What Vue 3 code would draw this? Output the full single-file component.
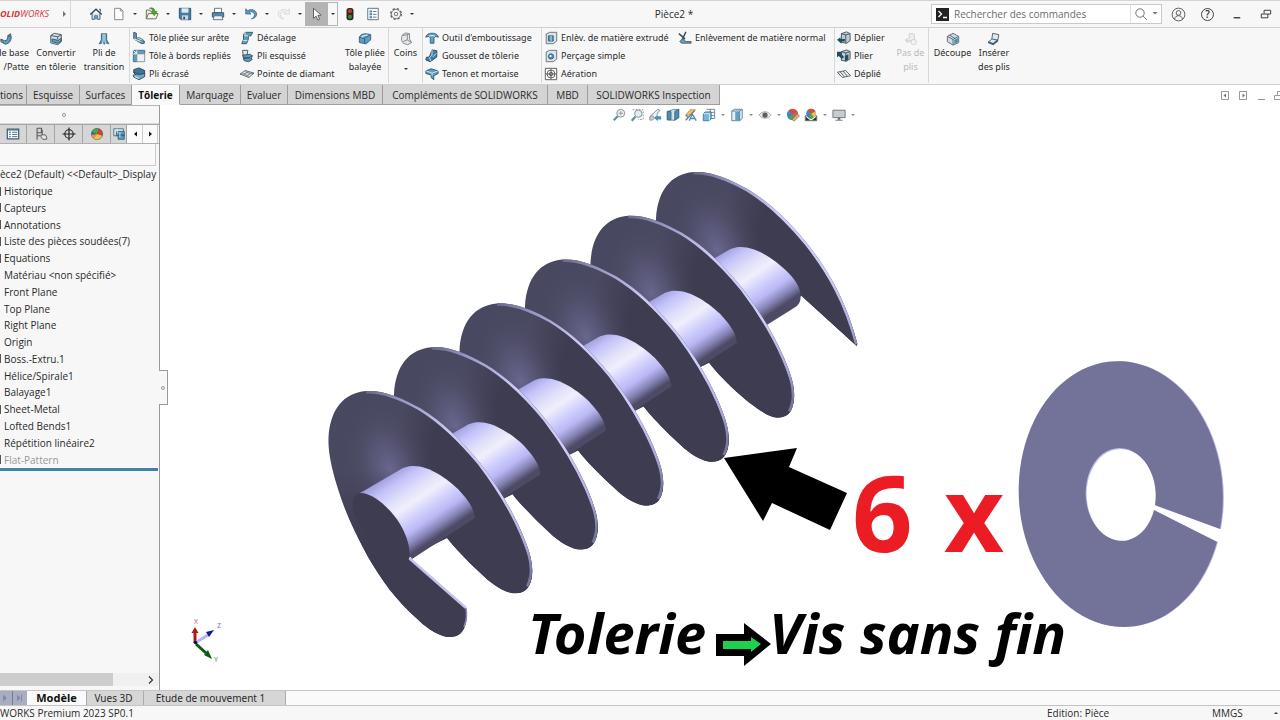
<script setup>
import { ref } from 'vue'

const steel = '#5d9dbd'
const pale = '#cfe3ee'
const ink = '#35505f'

const cube = `<path d="M5 3l6-2 4 2v8l-4 3-6-1z" fill="#c3cacf" stroke="${ink}"/><path d="M5 3l5 1.500 5-1.500M10 4.500V14" fill="none" stroke="${ink}"/>`

const icons = {
  home: `<path d="M3.500 7.500v6.500h3v-4h3v4h3V7.500" fill="#d5e5ee" stroke="#3a4a54"/><path d="M1.500 8.500L8 2.500l6.500 6" fill="none" stroke="#2d4654" stroke-width="1.600"/><path d="M11.500 2.500h1.500v3" fill="none" stroke="#3a4a54"/><path d="M6.500 10h3v4h-3z" fill="${steel}"/>`,
  page: `<path d="M3 1.500h6.500l3 3v10H3z" fill="#fff" stroke="#7d7d7d"/><path d="M9.500 1.500v3h3" fill="none" stroke="#7d7d7d"/>`,
  open: `<path d="M1.500 13.500v-10h4l1.500 2h5v2" fill="#efeedd" stroke="#5f5f4c"/><path d="M1.500 13.500l2.500-6h11l-2.500 6z" fill="#f6f5e6" stroke="#5f5f4c"/><path d="M5 1.500c4-1.500 6 .5 6.500 3.500h2.500L10.500 10 7 5h2c-.5-2-1.500-3-4-3.500z" fill="#49a52f" stroke="#2c7a1a" stroke-width=".5"/>`,
  save: `<path d="M1.500 1.500h13v13h-11l-2-2z" fill="#3f7fa5" stroke="#28506a"/><path d="M4 1.500h8v5H4z" fill="#dfeaf0"/><path d="M4.500 9.500h7v5h-7z" fill="#c9d6de"/><path d="M6 11h2v3H6z" fill="#28506a"/>`,
  print: `<path d="M4 1.500h8v5H4z" fill="#fff" stroke="#5b6a72"/><path d="M1.500 6.500h13v5h-13z" fill="#4e8db1" stroke="#2c5468"/><path d="M3.500 10h9l1 4.500h-11z" fill="#eaf0f3" stroke="#5b6a72"/>`,
  undo: `<path d="M2 2v6h6L6 6c3-1.500 6 .5 6 3 0 2-1.500 3.500-3.500 4.500C12 13 14.500 11 14.500 8 14 3.500 8.500 1.500 4.200 4.200z" fill="#5b9cc0" stroke="#2f5f7d" stroke-width=".8"/>`,
  redo: `<path d="M14 2v6H8l2-2c-3-1.500-6 .5-6 3 0 2 1.500 3.500 3.500 4.500C4 13 1.500 11 1.500 8 2 3.500 7.500 1.500 11.800 4.200z" fill="#f2f2f2" stroke="#cfcfcf" stroke-width=".8"/>`,
  cursor: `<path d="M4 1.500v11.500l3-2.500 2 4.500 2-1-2-4.300 3.700-.4z" fill="#fff" stroke="#444" stroke-width=".9"/>`,
  traffic: `<rect x="4" y="1" width="8" height="14" rx="3" fill="#33251f"/><circle cx="8" cy="4.700" r="2.400" fill="#c23a2c"/><circle cx="8" cy="11.200" r="2.400" fill="#2f8a42"/>`,
  props: `<path d="M2 1.500h12v13H2z" fill="#fff" stroke="#53646d"/><path d="M4 4h3v2.300H4zM4 7.200h3v2.300H4zM4 10.500h3v2.300H4z" fill="#4c87a8"/><path d="M8 5.200h4M8 8.400h4M8 11.600h4" stroke="#53646d"/>`,
  gear: `<circle cx="8" cy="8" r="6" fill="none" stroke="#666" stroke-width="1.800" stroke-dasharray="2.700 2.010"/><circle cx="8" cy="8" r="5.200" fill="#f7f7f7" stroke="#666" stroke-width=".9"/><circle cx="8" cy="8" r="2" fill="none" stroke="#666"/>`,
  user: `<circle cx="8" cy="8" r="6.800" fill="none" stroke="#555"/><circle cx="8" cy="6.300" r="2.500" fill="none" stroke="#555"/><path d="M3.800 13c.4-5 8-5 8.400 0" fill="none" stroke="#555"/>`,
  base: `<path d="M1 8l4 2c3 0 4-2 4-6l3-2c2 6 0 11-6 12l-5-3z" fill="${steel}" stroke="${ink}"/><path d="M9 4l3 1.500" stroke="${ink}"/>`,
  convert: `<path d="M2 4l4-2.500 8 1.500v8l-4 3.500-8-2z" fill="#d6dde1" stroke="${ink}"/><path d="M2 4l8 1.500L14 3M10 5.500v3" fill="none" stroke="${ink}"/><path d="M3.500 8l7 1.500L14 7v3.500L10.500 13l-7-2z" fill="${steel}" stroke="${ink}"/>`,
  lofted: `<path d="M5 2h6v7l2.500 4.500-4-1.500-1 2-1.500-2-4.500 1.500L5 9z" fill="${steel}" stroke="#2f5c78"/><path d="M7 2v8l-1 3M9 2v8l1 3" stroke="${pale}" fill="none"/>`,
  edge: `<path d="M2 1.500l3 1v6l9 3v2.500l-3 .5-9-5.500z" fill="${steel}" stroke="${ink}"/><path d="M5 8.500c3-2 6 0 9 3" fill="${pale}" stroke="${ink}"/><path d="M2 9l8 3" stroke="#fff"/>`,
  miter: `<path d="M1.500 1.500h13v4h-9v9h-4z" fill="${steel}" stroke="#376d8d"/><path d="M5.500 5.500h9v9h-9z" fill="#edf1f3" stroke="#7f8b92"/><path d="M1.500 1.500l4 4M1.500 5.500h4M5.500 1.500v4" stroke="#fff"/>`,
  hem: `<path d="M2 3l6-2 6.500 3v3L10 9 2 6z" fill="#3c7799" stroke="#234458"/><path d="M2 6c0 3 9 3 12.500 1v4L8 14.500 2 11.500c-1.500-2 0-3 2-3z" fill="#6fa9c6" stroke="#234458"/><path d="M3 11l5 2" stroke="#fff"/>`,
  jog: `<path d="M6 1.500h8.500l-2 4h-3v4l-2 5H2l2-5V4z" fill="${steel}" stroke="${ink}"/><path d="M6 1.500l-.5 4H9.500M3.500 11h5" stroke="#e3eff5" fill="none"/>`,
  sketched: `<path d="M3 1.500h6l-1 6h6l-1 4H4z" fill="#e1e9ed" stroke="${ink}"/><path d="M3 7l9-1 2 2-4 2-6-.500zM4 11l8-1 2 2-4 2.500-5-1z" fill="${steel}" stroke="${ink}"/>`,
  diamond: `<path d="M0 8l6-4 10 3-6 5z" fill="#e2e5e7" stroke="#59656b"/><path d="M4 8l4-2 4 1.500-3.500 2.500zM0 8l4 0M8 6l-2-2M12 7.500l4-.5M8.500 10l1.500 2" fill="#cbd3d7" stroke="#59656b" stroke-width=".8"/>`,
  swept: `<path d="M1.500 6c2-4 6-5 13-3v6L9 13.500 1.500 12z" fill="${steel}" stroke="#2e5f7c"/><path d="M1.500 6l6 1.500c1-1.500 3-2.500 7-4.500M7.500 7.500v5.500" fill="none" stroke="#2e5f7c"/><path d="M4 6c2-2.500 4-2.500 7-2.500" stroke="${pale}" fill="none" stroke-width="1.500"/>`,
  corner: `<path d="M4 3l4-2 4 1v6l2.500 4-4.500 2.500-5-1.500C2 10 2.500 6 4 3z" fill="#e4e6e7" stroke="#7b8388"/><path d="M4.500 11l5-2 4.500 3M9.500 9V3L12 2M9.500 3L4 4" fill="none" stroke="#7b8388"/>`,
  forming: `<path d="M.8 7c1-6 13.500-6 14.500 0l-4-.8-1 2V14H6V8.200l-1-2z" fill="#62a2c2" stroke="#2e5f7c"/><path d="M4.500 6c2-1 5-1 7 0" stroke="#fff" fill="none"/>`,
  gusset: `<path d="M8 1l5.500 1v7L6 14.500l-5-2 .5-3L5 9z" fill="#3f7fa5" stroke="#23485e"/><path d="M8 1v6l-3 3 2 4M9 9l4-4" stroke="#d7e9f2" fill="none"/>`,
  tenon: `<path d="M1 4.500L7 2l8 2.500v3L10 10v4.500L7 12V9L1 7.500z" fill="${steel}" stroke="#2a526a"/><path d="M1 4.500L8 7l7-2.500M8 7v3" stroke="#d7e9f2" fill="none"/>`,
  cutExtrude: `<path d="M2.500 3.500l4-2h8v10l-4 3h-8z" fill="#dfe3e6" stroke="#5c6a72"/><path d="M5 5.500h5.500v6H5z" fill="#4c90b5" stroke="#2e5f7c"/><path d="M8 5.500v6" stroke="#dbeaf2"/>`,
  hole: `<path d="M2.500 3.500l4-2h8v10l-4 3h-8z" fill="#dfe3e6" stroke="#5c6a72"/><ellipse cx="8" cy="8.500" rx="3" ry="3" fill="#4c90b5" stroke="#2e5f7c"/><circle cx="7.500" cy="8" r="1.200" fill="#fff"/>`,
  vent: `<path d="M1.500 1.500h13v13h-13z" fill="#fff" stroke="#4b4b4b"/><circle cx="8" cy="8" r="4.500" fill="none" stroke="#4b4b4b"/><circle cx="8" cy="8" r="2" fill="none" stroke="#4b4b4b"/><path d="M8 2v12M2 8h12" stroke="#4b4b4b"/>`,
  normalCut: `<path d="M1 3l7 6M9 1L4 11.500" stroke="#3b4a52" stroke-width="1.600"/><path d="M2 12l4-4 2.500 4h6.500v2H4z" fill="${steel}" stroke="#3b4a52" stroke-width=".8"/>`,
  unfold: `${cube}<path d="M0 10l4-3v2h5v3H5v2.500z" fill="#234b62"/>`,
  fold: `${cube}<path d="M0 3h6L4.500 5 8 9l-2.500 2.500L2 8 0 9.500zM9 8l4-2v6l-4 2z" fill="#234b62"/>`,
  flatten: `<path d="M.5 6L10 4l5.500 6-9.500 2z" fill="#e9ecee" stroke="#505a5f"/><path d="M3.500 5.300l5 6M7 4.700l5 6" stroke="#505a5f"/>`,
  noBends: `<path d="M6 1.500l6 1v6L3 12l-1.500-3L6 7z" fill="#ececec" stroke="#cfcfcf"/><path d="M2 9l6 2 5-2" fill="none" stroke="#cfcfcf"/><circle cx="11" cy="11.500" r="3" fill="#f3f3f3" stroke="#cfcfcf"/>`,
  rip: `<path d="M1.500 5L8 1.500 14.500 5v7L8 15l-6.500-4z" fill="#d5dade" stroke="#53646d"/><path d="M1.500 5L8 8.500 14.500 5M8 8.500V15M4 3.500l6.500 4" fill="none" stroke="#53646d"/><path d="M9.500 9l4-2.200v4.700l-4 2.300z" fill="#3d8fbd"/>`,
  insertBends: `<path d="M6.500 1.500l7 1.500-1 6L7 14 1.500 11.500l4-3.500z" fill="#e4e8ea" stroke="#43545d"/><path d="M5.500 8l7 1.200" stroke="#43545d"/><path d="M1.500 11.500L7 14l5.500-4.500" fill="none" stroke="#2f6585" stroke-width="2.200"/>`,
  zoomFit: `<circle cx="10" cy="6" r="4.500" fill="#eef3f6" stroke="#7c878d"/><path d="M6.500 9.500L2 14" stroke="#5c8aa3" stroke-width="2.400"/><path d="M10 3.500v5M7.500 6h5" stroke="#7c878d" stroke-width=".9"/>`,
  zoomArea: `<path d="M3 2h12v11H9" fill="none" stroke="#7c878d" stroke-dasharray="2 1.500"/><circle cx="9.500" cy="6.500" r="4.200" fill="#e5edf1" stroke="#7c878d"/><path d="M6 10l-4 4.500" stroke="#5c8aa3" stroke-width="2.400"/>`,
  previous: `<path d="M2 10L11 1.500l2.500 1L10 7.500" fill="#e6ebee" stroke="#7c878d"/><path d="M2 10.500c2-2 4-2 5 0s-3 4.500-5 3z" fill="#c9d1d6" stroke="#7c878d"/><path d="M7 11l4-3.500v2h4V13h-4v2z" fill="#4b8fb3"/>`,
  section: `<path d="M1.500 4l6-2 7-.5v9.500l-5 3-8-.5z" fill="#dfe7eb" stroke="#5c7a8a"/><path d="M1.500 4h4v9.500h-4zM10 4l4.500-2.500V11L10 14z" fill="#4b8fb3" stroke="#35667f"/><path d="M6.500 4v9" stroke="#8ba0ab"/>`,
  dynamic: `<path d="M2 8l5-6h6L8 8z" fill="#f0c36a" stroke="#a88341" stroke-width=".8"/><path d="M2 14L12 3M2 8l3 3" fill="none" stroke="#6b7b84" stroke-width="1.500"/><path d="M6 14.500L9.500 7l4.500 7.500M7.500 12h5" stroke="#4b8fb3" stroke-width="1.500" fill="none"/>`,
  orient: `<path d="M5 1.500h9.500V12H10" fill="#fff" stroke="#6d7a82"/><path d="M9.500 1.500v5M6 5h8.500M10 8.500h4.500" stroke="#6d7a82"/><path d="M1.500 6.500l2-2h7v8l-2 2h-7z" fill="#76b7d8" stroke="#35789b"/><path d="M1.500 6.500h7v8" fill="none" stroke="#dceef7"/>`,
  display: `<path d="M2 3.500l3-2h9v10.500l-3 2.500H2z" fill="#e4eff5" stroke="#5b7b8c"/><path d="M6 4.500h5v10H6z" fill="#5aa3c9"/><path d="M2 3.500h9v11M11 3.500l3-2" fill="none" stroke="#5b7b8c"/>`,
  eye: `<path d="M1 8c4-5 10-5 14 0-4 5-10 5-14 0z" fill="#e9e9e9" stroke="#a5a5a5"/><circle cx="8" cy="8" r="3" fill="#5c5c5c"/>`,
  ball: `<circle cx="7.500" cy="7.500" r="6.500" fill="#3f86c6"/><path d="M7.500 7.500L3 2.800A6.500 6.500 0 0 1 13 4z" fill="#db4a3c"/><path d="M7.500 7.500L13 4a6.500 6.500 0 0 1-2 8.500z" fill="#d9604c"/><path d="M7.500 7.500l3.500 5a6.500 6.500 0 0 1-8-.5z" fill="#4aa54f"/><path d="M7 13l6-6 2.500 2-6 6z" fill="#d9b67c" stroke="#77613f" stroke-width=".6"/>`,
  scene: `<path d="M1.500 9h13v5.500h-13z" fill="#fff" stroke="#4f4f4f"/><path d="M2 14V10l5 4zM14 14v-4l-5 4z" fill="#333"/><circle cx="8" cy="6.500" r="5.500" fill="#3f86c6"/><path d="M8 6.500L4.200 2.500A5.500 5.500 0 0 1 13 4z" fill="#db4a3c"/><path d="M8 6.500L13 4a5.500 5.500 0 0 1-2 7z" fill="#efc33f"/><path d="M8 6.500l3 4.500a5.500 5.500 0 0 1-6.500 0z" fill="#4aa54f"/>`,
  monitor: `<path d="M1 2.500h14v8.500H1z" fill="#c8ccce" stroke="#6a6f72"/><path d="M6.500 11h3v2.500h-3z" fill="#6a6f72"/><path d="M4 14h8" stroke="#6a6f72"/>`,
  feature: `<path d="M1.500 2.500h13v11h-13z" fill="#fff" stroke="#3b5f74" stroke-width="1.400"/><path d="M2 3.500h12" stroke="#3b5f74"/><path d="M3.500 6h2M3.500 8.500h2M3.500 11h2" stroke="#4b8fb3" stroke-width="1.500"/><path d="M7 6h6M7 8.500h6M7 11h6" stroke="#3b5f74"/>`,
  config: `<path d="M3.500 1.500v13M3.500 1.500h5v5h-5M3.500 10h4" fill="none" stroke="#555" stroke-width="1.200"/><path d="M9.500 3v6M8 9h5l1.500 2.500V14H10l-2-2.500z" fill="#e4e4e4" stroke="#555"/>`,
  target: `<circle cx="8" cy="8" r="4.800" fill="none" stroke="#222" stroke-width="1.300"/><path d="M8 .5v15M.5 8h15" stroke="#222" stroke-width="1.300"/>`,
  sphere: `<circle cx="8" cy="8" r="6.500" fill="#3f5fa4" stroke="#555" stroke-width=".6"/><path d="M8 8L2 5.500A6.500 6.500 0 0 1 10 2z" fill="#4aa54f"/><path d="M8 8l2-6a6.500 6.500 0 0 1 4 8z" fill="#d93d31"/><path d="M8 8l6 2a6.500 6.500 0 0 1-10 3z" fill="#efc33f"/><path d="M8 8l-4 5a6.500 6.500 0 0 1-2.400-4z" fill="#e89a3a"/>`,
  cam: `<path d="M2 2h11v8H2z" fill="#dbe8ef" stroke="#476f85"/><path d="M5 5h9v5H5zM7 9h7v5H7z" fill="#5d9dbd" stroke="#35607a"/><path d="M6 2v5M9 6v6" stroke="#e6f1f6"/>`
}

const fileTools = [
  { icon: 'home', label: 'Accueil' },
  { icon: 'page', label: 'Nouveau', menu: true },
  { icon: 'open', label: 'Ouvrir', menu: true },
  { icon: 'save', label: 'Enregistrer', menu: true },
  { icon: 'print', label: 'Imprimer', menu: true },
  { icon: 'undo', label: 'Annuler', menu: true },
  { icon: 'redo', label: 'Rétablir', menu: true, off: true },
  { icon: 'cursor', label: 'Sélectionner', menu: true, active: true },
  { icon: 'traffic', label: 'Reconstruire' },
  { icon: 'props', label: 'Propriétés' },
  { icon: 'gear', label: 'Options', menu: true }
]

const ribbon = [
  { big: true, icon: 'base', lines: ['de base', '/Patte'], cut: true },
  { big: true, icon: 'convert', lines: ['Convertir', 'en tôlerie'] },
  { big: true, icon: 'lofted', lines: ['Pli de', 'transition'] },
  { sep: true, items: [['edge', 'Tôle pliée sur arête'], ['miter', 'Tôle à bords repliés'], ['hem', 'Pli écrasé']] },
  { items: [['jog', 'Décalage'], ['sketched', 'Pli esquissé'], ['diamond', 'Pointe de diamant']] },
  { big: true, icon: 'swept', lines: ['Tôle pliée', 'balayée'] },
  { big: true, sep: true, icon: 'corner', lines: ['Coins'], menu: true },
  { sep: true, items: [['forming', "Outil d'emboutissage"], ['gusset', 'Gousset de tôlerie'], ['tenon', 'Tenon et mortaise']] },
  { sep: true, items: [['cutExtrude', 'Enlèv. de matière extrudé'], ['hole', 'Perçage simple'], ['vent', 'Aération']] },
  { items: [['normalCut', 'Enlèvement de matière normal']] },
  { sep: true, items: [['unfold', 'Déplier'], ['fold', 'Plier'], ['flatten', 'Déplié']] },
  { big: true, icon: 'noBends', lines: ['Pas de', 'plis'], off: true },
  { big: true, sep: true, icon: 'rip', lines: ['Découpe'] },
  { big: true, icon: 'insertBends', lines: ['Insérer', 'des plis'] }
]

const tabs = ['tions', 'Esquisse', 'Surfaces', 'Tôlerie', 'Marquage', 'Evaluer', 'Dimensions MBD', 'Compléments de SOLIDWORKS', 'MBD', 'SOLIDWORKS Inspection']
const activeTab = ref('Tôlerie')

const panelTabs = [['feature', 'Arbre'], ['config', 'Configurations'], ['target', 'Cotations'], ['sphere', 'Apparences'], ['cam', 'Usinage']]

const tree = [
  { t: 'èce2 (Default) <<Default>_Display', root: true },
  { t: 'Historique', m: true },
  { t: 'Capteurs', m: true },
  { t: 'Annotations', m: true },
  { t: 'Liste des pièces soudées(7)', m: true },
  { t: 'Equations', m: true },
  { t: 'Matériau <non spécifié>' },
  { t: 'Front Plane' },
  { t: 'Top Plane' },
  { t: 'Right Plane' },
  { t: 'Origin' },
  { t: 'Boss.-Extru.1', m: true },
  { t: 'Hélice/Spirale1' },
  { t: 'Balayage1' },
  { t: 'Sheet-Metal', m: true },
  { t: 'Lofted Bends1' },
  { t: 'Répétition linéaire2' },
  { t: 'Flat-Pattern', m: true, off: true }
]

const viewTools = [
  ['zoomFit', 'Zoom au mieux'], ['zoomArea', 'Zoom fenêtre'], ['previous', 'Vue précédente'], ['section', 'Vue en coupe'],
  ['dynamic', 'Annotations dynamiques'], ['orient', 'Orientation', true], ['display', "Style d'affichage", true],
  ['eye', 'Masquer', true], ['ball', 'Apparence'], ['scene', 'Scène', true], ['monitor', 'Affichage', true]
]

const sheets = ['Modèle', 'Vues 3D', 'Etude de mouvement 1']
const activeSheet = ref('Modèle')

const step = { x: 65.5, y: -43.8 }
const turns = [4, 3, 2, 1, 0].map(n => `translate(${n * step.x} ${n * step.y})`)
const lastTurn = `translate(${5 * step.x} ${5 * step.y})`
</script>

<template>
  <div class="app">
    <header class="titlebar">
      <div class="brand"><b>OLID</b><i>WORKS</i><span class="brand-arrow"></span></div>
      <div class="file-tools">
        <div v-for="f in fileTools" :key="f.icon" class="tool" :class="{ active: f.active, off: f.off }">
          <button class="tool-btn" :aria-label="f.label"><svg class="ico" viewBox="0 0 16 16" v-html="icons[f.icon]"></svg></button>
          <button v-if="f.menu" class="tool-menu" :aria-label="f.label + ' menu'"><span class="caret"></span></button>
        </div>
      </div>
      <div class="doc-title">Pièce2 *</div>
      <div class="title-right">
        <div class="search">
          <svg class="prompt" viewBox="0 0 13 13"><rect width="13" height="13" fill="#222" /><path d="M2.500 3l3 3-3 3M7 9.500h4" stroke="#fff" stroke-width="1.300" fill="none" /></svg>
          <input type="text" placeholder="Rechercher des commandes" aria-label="Rechercher des commandes" />
          <button class="search-go" aria-label="Lancer la recherche">
            <svg viewBox="0 0 24 16"><circle cx="6" cy="7" r="4.200" fill="none" stroke="#777" /><path d="M9 10l4 4" stroke="#777" /><path d="M18.500 6h5l-2.500 2.500z" fill="#777" /></svg>
          </button>
        </div>
        <button class="win" aria-label="Compte"><svg viewBox="0 0 16 16" v-html="icons.user"></svg></button>
        <button class="win help" aria-label="Aide"><span>?</span></button>
        <button class="win" aria-label="Réduire"><svg viewBox="0 0 16 16"><path d="M5 11.500h7" stroke="#222" stroke-width="1.300" /></svg></button>
        <button class="win" aria-label="Restaurer"><svg viewBox="0 0 16 16"><path d="M3.500 7.500h7v4h-7zM6.500 7V3.500h7v4h-3" fill="none" stroke="#333" /></svg></button>
      </div>
    </header>

    <section class="ribbon">
      <div v-for="(g, i) in ribbon" :key="i" class="group" :class="{ sep: g.sep, off: g.off, cut: g.cut }">
        <button v-if="g.big" class="big">
          <svg class="ico" viewBox="0 0 16 16" v-html="icons[g.icon]"></svg>
          <span v-for="l in g.lines" :key="l">{{ l }}</span>
          <span v-if="g.menu" class="caret"></span>
        </button>
        <template v-else>
          <button v-for="it in g.items" :key="it[1]" class="small">
            <svg class="ico" viewBox="0 0 16 16" v-html="icons[it[0]]"></svg>{{ it[1] }}
          </button>
        </template>
      </div>
    </section>

    <div class="tabrow">
      <nav class="tabs">
        <button v-for="t in tabs" :key="t" :class="{ on: t === activeTab }" @click="activeTab = t">{{ t }}</button>
      </nav>
      <div class="doc-win">
        <svg viewBox="0 0 62 12" fill="none" stroke="#999">
          <path d="M3.500 1.500h7v8h-7z M21.500 1.500h7v8h-7z M40 9.500h7 M56.500 5.500h7v4h-7z M59.500 5V1.500h7" />
          <path d="M8 3.500v4l-2.500-2zM24.500 3.500v4l2.500-2z" fill="#777" stroke="none" />
        </svg>
      </div>
    </div>

    <main class="work">
      <aside class="panel">
        <div class="grip"><span></span></div>
        <div class="panel-tabs">
          <button v-for="p in panelTabs" :key="p[0]" :aria-label="p[1]"><svg class="ico" viewBox="0 0 16 16" v-html="icons[p[0]]"></svg></button>
          <button class="nudge" aria-label="Précédent"><svg viewBox="0 0 6 8"><path d="M5 1.500v5L2 4z" fill="#111" /></svg></button>
          <button class="nudge" aria-label="Suivant"><svg viewBox="0 0 6 8"><path d="M2 1.500v5L5 4z" fill="#111" /></svg></button>
        </div>
        <input class="filter" type="text" aria-label="Filtre" />
        <ul class="tree">
          <li v-for="n in tree" :key="n.t" :class="{ root: n.root, mark: n.m, off: n.off }">{{ n.t }}</li>
        </ul>
        <div class="rollback"></div>
        <div class="hscroll"><span class="thumb"></span><svg viewBox="0 0 6 8"><path d="M1 .5L4.500 4 1 7.500" fill="none" stroke="#333" stroke-width="1.200" /></svg></div>
        <button class="drawer" aria-label="Replier le panneau"><span></span></button>
      </aside>

      <div class="stage">
        <svg class="scene" viewBox="160 105 1120 585">
          <defs>
            <linearGradient id="tube" gradientUnits="userSpaceOnUse" x1="399" y1="461" x2="446" y2="531">
              <stop offset="0" stop-color="#6d6c98" />
              <stop offset=".08" stop-color="#a3a2dc" />
              <stop offset=".2" stop-color="#c3c2fb" />
              <stop offset=".36" stop-color="#dfdff9" />
              <stop offset=".5" stop-color="#f0effc" />
              <stop offset=".66" stop-color="#cfcefb" />
              <stop offset=".78" stop-color="#b9b8f5" />
              <stop offset=".9" stop-color="#8583b4" />
              <stop offset="1" stop-color="#4c4a64" />
            </linearGradient>
            <linearGradient id="flight" gradientUnits="userSpaceOnUse" x1="350" y1="430" x2="430" y2="455">
              <stop offset="0" stop-color="#484860" />
              <stop offset=".5" stop-color="#4a4962" />
              <stop offset="1" stop-color="#3d3c51" />
            </linearGradient>
            <linearGradient id="fall" gradientUnits="userSpaceOnUse" x1="370" y1="470" x2="375" y2="540">
              <stop offset="0" stop-color="#3d3c51" stop-opacity="0" />
              <stop offset="1" stop-color="#3d3c51" />
            </linearGradient>
            <linearGradient id="rimTone" gradientUnits="userSpaceOnUse" x1="366" y1="391" x2="532" y2="574">
              <stop offset="0" stop-color="#6a6988" />
              <stop offset=".12" stop-color="#9695c4" />
              <stop offset=".35" stop-color="#cdccf6" />
              <stop offset=".7" stop-color="#cdccf6" />
              <stop offset=".9" stop-color="#a9a8d8" />
              <stop offset="1" stop-color="#77769b" />
            </linearGradient>
            <radialGradient id="glow" gradientUnits="userSpaceOnUse" cx="0" cy="0" r="1" gradientTransform="translate(390 470) rotate(-108) scale(76 44)">
              <stop offset="0" stop-color="#69678e" />
              <stop offset=".35" stop-color="#5f5d80" stop-opacity=".7" />
              <stop offset=".7" stop-color="#53516c" stop-opacity=".3" />
              <stop offset="1" stop-color="#4b4a62" stop-opacity="0" />
            </radialGradient>
            <path id="turnShape" d="M466 608C468 618 466 628 461 633C457 637 453 637 447 637C436 635 424 626 415 617C396 600 382 581 368 557C355 533 345 512 338 489C331 467 328 451 328.500 438C330 410 343 393 366 391C384 390 402 398 420 408C443 422 461 440 480 463C499 488 513 512 522 533C530 552 533 562 532 574C531 587 526 593 515 593C504 592 485 577 470 563C461 554 453 546 447 538L409 557Z" />
            <path id="lastShape" d="M366 391C384 390 402 398 420 408C443 422 461 440 480 463C502 491 519 521 530 563L529 565L474 515L400 540L345 500C332 470 328 451 328.500 438C330 410 343 393 366 391Z" />
            <clipPath id="turnClip"><use href="#turnShape" /></clipPath>
            <clipPath id="lastClip"><use href="#lastShape" /></clipPath>
            <path id="rim" d="M366 391C384 390 402 398 420 408C443 422 461 440 480 463C499 488 513 512 522 533C530 552 533 562 532 574C531 580 530 584 528 587" />
            <path id="lastRim" d="M366 391C384 390 402 398 420 408C443 422 461 440 480 463C502 491 519 521 530 563" />
            <path id="bore" d="M360 493L403 468C422 460 445 477 458 489C468 500 474 508 475 518L412 559Z" />
          </defs>

          <g :transform="lastTurn">
            <use href="#lastShape" fill="url(#flight)" />
            <g clip-path="url(#lastClip)">
              <use href="#lastShape" fill="url(#glow)" />
              <use href="#lastShape" fill="url(#fall)" />
              <use href="#lastRim" fill="none" stroke="url(#rimTone)" stroke-width="5" />
            </g>
            <path d="M360 493L403 468C422 460 445 477 458 489C468 498 474 508 473 517C473 521 471 524 468 526L412 561Z" fill="url(#tube)" />
          </g>

          <g v-for="t in turns" :key="t" :transform="t">
            <use href="#turnShape" fill="url(#flight)" />
            <g clip-path="url(#turnClip)">
              <use href="#turnShape" fill="url(#glow)" />
              <use href="#turnShape" fill="url(#fall)" />
              <use href="#rim" fill="none" stroke="url(#rimTone)" stroke-width="5" />
            </g>
            <use href="#bore" fill="url(#tube)" />
          </g>

          <path d="M409 558L466 608" stroke="#c3c2f0" stroke-width="2.500" />
          <path d="M466 608C467 614 467 620 464 627" fill="none" stroke="#8c8bb4" stroke-width="1.500" />
          <path d="M353 508C352 498 356 493 362 493C374 494 391 509 400 524C407 536 411 549 409 558L407 564C390 560 356 530 353 508Z" fill="#3d3c51" />

          <path d="M1221 529A102 133 -3 1 0 1218 542L1155 511A35 46.500 -3 1 1 1156 506Z" fill="#bdbcec" />
          <path d="M1220 529A102 133 -3 1 0 1217 542L1154 510A35 46.500 -3 1 1 1155 505Z" fill="#737299" />

          <path d="M724 458L797 448L789 467L847 493L830 530L772 503L763 521Z" fill="#000" />
          <path d="M716 634H744V623L771 644L744 666V656H716Z" fill="#000" />
          <path d="M723 641H751V637L761 644L751 652V649H723Z" fill="#1fd04f" />

          <text class="count" x="852" y="552">6</text>
          <text class="count times" x="944" y="552">x</text>
          <text class="caption" x="528" y="654">Tolerie</text>
          <text class="caption" x="769" y="654">Vis sans fin</text>

          <g stroke-width="2.500" fill="none">
            <path d="M195 643V632" stroke="#b01818" stroke-width="3" />
            <path d="M191.500 633L195 627L198.500 633Z" fill="#b01818" />
            <path d="M195 643L208 635" stroke="#b5b5f5" stroke-width="3" />
            <path d="M206 632L214 630L209 637Z" fill="#16169c" />
            <path d="M196 644L206 653" stroke="#0b5a12" stroke-width="3" />
            <path d="M204 655L208 650L212 659Z" fill="#0b5a12" />
            <circle cx="195.500" cy="642.500" r="1.800" fill="#101060" />
          </g>
          <text class="axis" x="194" y="624" fill="#c66">X</text>
          <text class="axis" x="217" y="628" fill="#77c">Z</text>
          <text class="axis" x="214" y="662" fill="#4a8a4a">Y</text>
        </svg>
        <div class="view-tools">
          <button v-for="v in viewTools" :key="v[0]" :aria-label="v[1]" :class="{ wide: v[2] }">
            <svg class="ico" viewBox="0 0 16 16" v-html="icons[v[0]]"></svg><span v-if="v[2]" class="caret"></span>
          </button>
        </div>
      </div>
    </main>

    <nav class="sheets">
      <div class="sheet-nav">
        <svg viewBox="0 0 27 14"><path d="M12.500 0v14" stroke="#777b92" /><path d="M3 3.500v7L7 7zM17 3.500v7l3.500-3.500z" fill="#8589a3" /><path d="M21.500 3.500v7" stroke="#8589a3" /></svg>
      </div>
      <button v-for="s in sheets" :key="s" :class="{ on: s === activeSheet }" @click="activeSheet = s">{{ s }}</button>
    </nav>

    <footer class="status">
      <span class="version">WORKS Premium 2023 SP0.1</span>
      <span class="mode">Edition: Pièce</span>
      <span class="units">MMGS</span>
      <span class="up"></span>
    </footer>
  </div>
</template>

<style>
html,
body,
#app {
  height: 100%;
}
</style>

<style scoped>
.app {
  display: flex;
  flex-direction: column;
  height: 100%;
  overflow: hidden;
  background: #fff;
  color: #2a2a2a;
  font: 10px/14px "Open Sans", "Noto Sans", sans-serif;
}
button {
  margin: 0;
  padding: 0;
  border: 0;
  background: none;
  color: inherit;
  font: inherit;
  white-space: nowrap;
}
.ico {
  width: 14px;
  height: 14px;
  flex: none;
}
.caret {
  width: 0;
  height: 0;
  border: 2px solid transparent;
  border-top-color: #333;
  border-bottom: 0;
}

.titlebar {
  display: flex;
  align-items: stretch;
  flex: none;
  height: 28px;
  box-sizing: border-box;
  border-top: 1px solid #d4d4d4;
  border-bottom: 1px solid #cfcfcf;
  background: #f7f7f7;
}
.brand {
  display: flex;
  align-items: center;
  width: 71px;
  margin-right: 13px;
  box-sizing: border-box;
  border-right: 1px solid #d8d8d8;
  color: #d2393a;
  font-size: 9px;
  font-style: italic;
  white-space: nowrap;
}
.brand-arrow {
  margin-left: auto;
  margin-right: 4px;
  border: 3px solid transparent;
  border-left-color: #777;
  border-right: 0;
}
.file-tools {
  display: flex;
  align-items: center;
}
.tool {
  display: flex;
  align-items: center;
  height: 24px;
  box-sizing: border-box;
}
.tool-btn {
  display: flex;
  align-items: center;
  justify-content: center;
  width: 23px;
  height: 100%;
}
.tool-menu {
  display: flex;
  justify-content: center;
  align-items: center;
  width: 10px;
  height: 100%;
}
.tool.active {
  border: 1px solid #b5b5b5;
}
.tool.active .tool-btn {
  width: 22px;
  background: #b3b3b3;
}
.tool.active .tool-menu {
  width: 9px;
}
.doc-title {
  flex: 1;
  align-self: center;
  text-align: center;
}
.title-right {
  display: flex;
  align-items: center;
}
.search {
  display: flex;
  align-items: center;
  width: 231px;
  height: 20px;
  margin-right: 2px;
  box-sizing: border-box;
  border: 1px solid #c9c9c9;
  background: #fff;
}
.prompt {
  width: 13px;
  height: 13px;
  margin-left: 4px;
}
.search input {
  flex: 1;
  min-width: 0;
  margin: 0;
  padding: 0 0 0 5px;
  border: 0;
  outline: 0;
  background: none;
  color: #333;
  font: inherit;
}
.search input::placeholder {
  color: #6c6c6c;
  opacity: 1;
}
.search-go {
  display: flex;
  align-items: center;
  justify-content: center;
  width: 31px;
  height: 100%;
  border-left: 1px solid #e2e2e2;
}
.search-go svg {
  width: 24px;
  height: 16px;
}
.win {
  display: flex;
  justify-content: center;
  align-items: center;
  width: 29px;
}
.win svg {
  width: 15px;
  height: 15px;
}
.help span {
  width: 11px;
  height: 11px;
  border: 1px solid #444;
  border-radius: 50%;
  font-size: 10px;
  line-height: 11px;
  font-weight: 600;
}

.ribbon {
  display: grid;
  grid-template-columns: 33px 46px 50px 109px 104px 46px 34px 119px 135px 158px 59px 35px 48px 36px;
  flex: none;
  height: 57px;
  box-sizing: border-box;
  padding-bottom: 1px;
  border-bottom: 1px solid #cfcfcf;
  background: #f7f7f7;
  font-family: "Noto Sans", "Open Sans", sans-serif;
  font-size: 9px;
}
.group {
  display: flex;
  flex-direction: column;
  padding-top: 1px;
  min-width: 0;
}
.group.sep {
  border-left: 1px solid #d8d8d8;
}
.group.off {
  color: #b9b9b9;
}
.small {
  display: flex;
  align-items: center;
  gap: 3px;
  height: 18px;
  padding-left: 2px;
}
.big {
  display: flex;
  flex-direction: column;
  align-items: center;
  padding-top: 3px;
}
.big .caret {
  margin-top: 8px;
}
.cut .big {
  align-items: flex-end;
  padding-right: 4px;
}
.cut .ico {
  align-self: flex-start;
}

.tabrow {
  display: flex;
  justify-content: space-between;
  flex: none;
  height: 20px;
}
.tabs {
  display: grid;
  grid-template-columns: 27px 53px 52px 48px 61px 47px 95px 165px 40px 132px;
}
.tabs button {
  box-sizing: border-box;
  border-right: 1px solid #9d9d9d;
  border-bottom: 1px solid #9d9d9d;
  background: #d4d4d4;
}
.tabs button:first-child {
  text-align: left;
}
.tabs button.on {
  background: #f9f9f9;
  font-weight: 700;
  color: #111;
  border-bottom-color: #f9f9f9;
}
.doc-win {
  padding: 5px 0 0;
  overflow: hidden;
}
.doc-win svg {
  display: block;
  width: 62px;
  height: 12px;
}

.work {
  display: flex;
  flex: 1;
  min-height: 0;
}
.panel {
  position: relative;
  display: flex;
  flex-direction: column;
  width: 160px;
  box-sizing: border-box;
  border-right: 1px solid #9a9a9a;
  border-top: 1px solid #b5b5b5;
  background: #f7f7f7;
}
.grip {
  display: flex;
  justify-content: center;
  align-items: center;
  height: 17px;
  padding-right: 32px;
  border-bottom: 1px solid #dadada;
}
.grip span,
.drawer span {
  width: 2px;
  height: 2px;
  border: 1px solid #999;
  border-radius: 50%;
}
.panel-tabs {
  display: grid;
  grid-template-columns: 27px 28px 28px 28px 16px 16px 15px;
  height: 18px;
  border-top: 1px solid #a5a5a5;
  border-bottom: 1px solid #b0b0b0;
}
.panel-tabs button {
  display: flex;
  justify-content: center;
  align-items: center;
  border-right: 1px solid #a5a5a5;
  background: #d6d6d6;
  overflow: hidden;
}
.panel-tabs .nudge {
  background: #fafafa;
  border-right-color: #ccc;
}
.nudge svg,
.hscroll svg {
  width: 6px;
  height: 8px;
}
.filter {
  height: 22px;
  width: 157px;
  margin: 0 0 0 -1px;
  padding: 0 4px;
  box-sizing: border-box;
  border: 1px solid #cacaca;
  border-top: 0;
  background: #f9f9f9;
  font: inherit;
}
.tree {
  display: grid;
  grid-auto-rows: 1fr;
  height: 302px;
  margin: 0;
  padding: 0;
  list-style: none;
  overflow: hidden;
}
.tree li {
  display: flex;
  align-items: center;
  padding-left: 4px;
  white-space: nowrap;
}
.tree .root {
  padding-left: 0;
}
.tree .mark::before {
  content: "";
  width: 1px;
  height: 9px;
  margin: 0 3px 0 -4px;
  background: #555;
}
.tree .off {
  color: #999;
}
.rollback {
  height: 3px;
  margin-right: 1px;
  background: #3f83aa;
}
.hscroll {
  display: flex;
  align-items: center;
  justify-content: space-between;
  height: 13px;
  margin-top: auto;
  margin-bottom: 4px;
  padding-right: 5px;
  background: #f0f0f0;
}
.thumb {
  width: 113px;
  height: 100%;
  background: #cdcdcd;
}
.drawer {
  position: absolute;
  left: 100%;
  top: 264px;
  z-index: 2;
  display: flex;
  align-items: center;
  justify-content: center;
  width: 9px;
  height: 35px;
  box-sizing: border-box;
  border: 1px solid #9a9a9a;
  border-left: 0;
  background: #f7f7f7;
}

.stage {
  position: relative;
  flex: 1;
  min-width: 0;
}
.scene {
  display: block;
  width: 100%;
  height: 100%;
}
.scene text {
  font-family: "Noto Sans", "Open Sans", sans-serif;
}
.scene .count {
  font-size: 106px;
  font-weight: 700;
  fill: #ec1c24;
}
.scene .times {
  font-size: 104px;
}
.scene .caption {
  font-size: 56px;
  font-weight: 700;
  font-style: italic;
}
.scene .axis {
  font-size: 7px;
}
.view-tools {
  position: absolute;
  top: 1px;
  left: 450px;
  display: flex;
}
.view-tools button {
  display: flex;
  align-items: center;
  justify-content: center;
  width: 18px;
  height: 18px;
}
.view-tools button.wide {
  justify-content: space-between;
  width: 28px;
  padding: 0 3px 0 2px;
}
.view-tools .caret {
  border-top-color: #8a8a8a;
}

.sheets {
  display: grid;
  grid-template-columns: 27px 60px 57px 142px 1fr;
  flex: none;
  height: 16px;
  box-sizing: border-box;
  border-top: 1px solid #c4c4c4;
  border-bottom: 1px solid #c4c4c4;
  background: #fafafa;
}
.sheet-nav {
  background: #a9adc2;
}
.sheet-nav svg {
  display: block;
  width: 27px;
  height: 14px;
}
.sheets button {
  border-right: 1px solid #aaa;
  background: #d6d6d6;
  padding-right: 8px;
  font-family: "Noto Sans", "Open Sans", sans-serif;
}
.sheets button:nth-child(3) {
  padding-right: 3px;
}
.sheets button.on {
  padding-right: 0;
  background: #fafafa;
  color: #111;
  font-size: 11px;
  font-weight: 700;
}
.status {
  display: flex;
  align-items: center;
  flex: none;
  height: 14px;
  padding-right: 2px;
  background: #f7f7f7;
}
.version {
  flex: 1;
}
.mode {
  width: 165px;
}
.units {
  width: 62px;
}
.up {
  border: 2px solid transparent;
  border-bottom-color: #333;
  border-top: 0;
}
</style>
